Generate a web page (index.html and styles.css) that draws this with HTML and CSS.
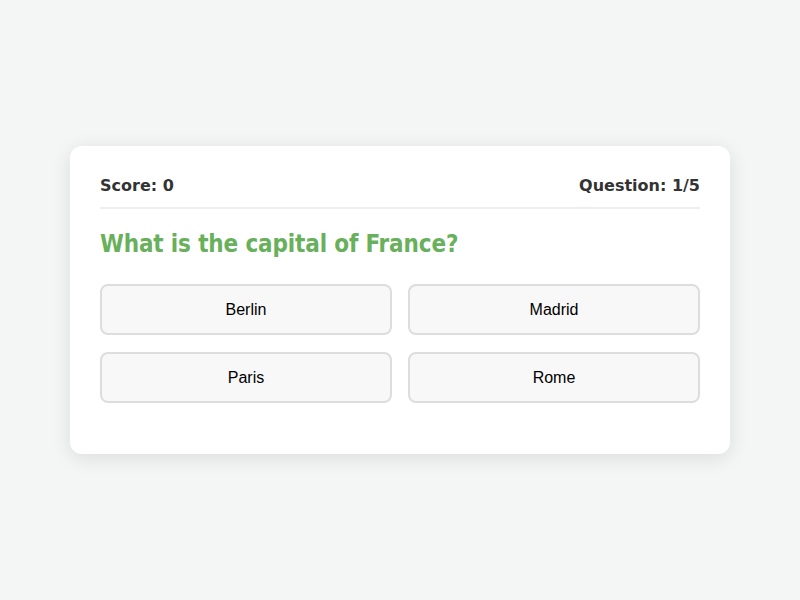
FILE: index.html
```html
<!DOCTYPE html>
<html lang="en">
<head>
  <meta charset="UTF-8" />
  <meta name="viewport" content="width=device-width, initial-scale=1.0"/>
  <title>Quiz</title>
  <link rel="stylesheet" href="styles.css">
</head>
<body>

  <div class="quiz-container">
    <div class="quiz-header">
      <span id="score">Score: 0</span>
      <span id="progresso">Question: 1/5</span>
    </div>

    <h2 class="pergunta" id="pergunta">What is the capital of France?</h2>

    <div class="opcoes" id="opcoes">
      <button class="opcao">Berlin</button>
      <button class="opcao">Madrid</button>
      <button class="opcao">Paris</button>
      <button class="opcao">Rome</button>
    </div>
  </div>

</body>
</html>
```

FILE: styles.css
```css
* {
  margin: 0;
  padding: 0;
  box-sizing: border-box;
}

body {
  font-family: 'DejaVu Sans Condensed', 'DejaVu Sans', sans-serif;
  background-color: #f4f5f5;
  height: 100vh;
  display: flex;
  justify-content: center;
  align-items: center;
}

.quiz-container {
  width: 660px;
  background: #fff;
  border-radius: 12px;
  padding: 30px 30px 51px;
  box-shadow: 0 4px 20px rgba(0, 0, 0, 0.1);
}

.quiz-header {
  display: flex;
  justify-content: space-between;
  font-family: 'DejaVu Sans', sans-serif;
  font-size: 16px;
  font-weight: bold;
  color: #333;
  padding-bottom: 12px;
  border-bottom: 2px solid #eee;
}

.pergunta {
  font-size: 24px;
  letter-spacing: -0.15px;
  color: #68b05c;
  margin: 21px 0 26px;
}

.opcoes {
  display: grid;
  grid-template-columns: 1fr 1fr;
  gap: 17px 16px;
}

.opcao {
  font-family: 'Liberation Sans', Arial, sans-serif;
  font-size: 16px;
  color: #000;
  background-color: #f8f8f8;
  border: 2px solid #ddd;
  border-radius: 8px;
  height: 51px;
  cursor: pointer;
}

.opcao:hover {
  background-color: #eee;
}
```
